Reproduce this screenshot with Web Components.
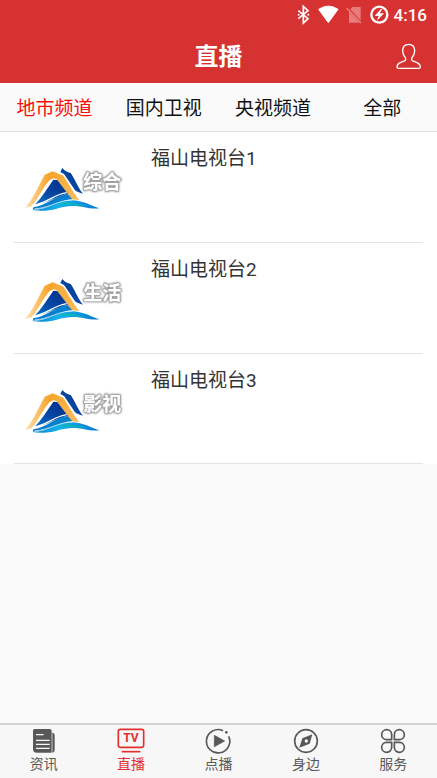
<!DOCTYPE html>
<html lang="zh-CN">
<head>
<meta charset="utf-8">
<meta name="viewport" content="width=device-width, initial-scale=1">
<title>直播</title>
<style>
html, body { margin: 0; height: 100%; }
body { font-family: Roboto, "Noto Sans CJK SC", sans-serif; background: #fafafa; color: #333; }
</style>
</head>
<body>
<live-app></live-app>
<script>
const define = (name, html, setup) => {
  const template = document.createElement('template');
  template.innerHTML = html;
  customElements.define(name, class extends HTMLElement {
    constructor() {
      super();
      this.attachShadow({ mode: 'open' }).append(template.content.cloneNode(true));
    }
    connectedCallback() { if (setup) setup(this, this.shadowRoot); }
  });
};

define('status-bar', `
<style>
:host { display: flex; justify-content: flex-end; align-items: center; height: 30px; padding: 0 10px; color: #fff; font-size: 17px; font-weight: 500; line-height: 20px; }
svg { display: block; width: 107px; height: 30px; }
</style>
<svg viewBox="0 0 321 90" fill="none" aria-hidden="true">
  <path d="M34 32 63 56 49 69V19L63 32 34 56" stroke="#fff" stroke-width="5"/>
  <circle cx="35" cy="44" r="3" fill="#fff"/><circle cx="64" cy="44" r="3" fill="#fff"/>
  <path d="M95 28Q124 9 153 28L124 68Z" fill="#fff" stroke="#fff" stroke-width="3" stroke-linejoin="round"/>
  <path d="M196 21h25v47h-35V33Z" fill="#e87c7d"/>
  <path d="m180 23 44 47" stroke="#d63232" stroke-width="7"/>
  <path d="m179 25 43 44" stroke="#e88383" stroke-width="4"/>
  <circle cx="277" cy="44" r="24" stroke="#fff" stroke-width="7"/>
  <path d="m282 27-19 21h12l-5 14 21-22h-13l8-13Z" fill="#fff"/>
</svg>
<slot></slot>`);

define('page-header', `
<style>
:host { display: block; height: 83px; background: #d63232; color: #fff; }
.bar { display: grid; grid-template-columns: 1fr auto 1fr; align-items: center; height: 53px; padding: 0 15px; }
h1 { grid-column: 2; margin: 0; font-size: 24px; line-height: 32px; font-weight: 700; }
button { justify-self: end; padding: 0; border: 0; background: none; color: inherit; }
svg { display: block; width: 28px; height: 28px; }
</style>
<status-bar>4:16</status-bar>
<div class="bar">
  <h1><slot></slot></h1>
  <button aria-label="个人中心"><svg viewBox="0 0 84 84" fill="none" stroke="#fff" stroke-width="4" stroke-linejoin="round">
    <path d="M34 44C28 37 26 31 26 24 26 12 33 4 44 4s18 8 18 20c0 7-2 13-8 20-3 6-1 9 6 11 12 4 19 7 19 17 0 3-2 4-5 4H14c-3 0-5-1-5-4 0-10 7-13 19-17 7-2 9-5 6-11Z"/></svg></button>
</div>`);

define('channel-tabs', `
<style>
:host { display: block; border-bottom: 1px solid #e2e2e2; background: #fafafa; }
nav { display: grid; grid-template-columns: repeat(4, 1fr); height: 48px; }
::slotted(button) { padding: 3px 0 0; border: 0; background: none; font: inherit; font-size: 19px; line-height: 28px; color: #111; }
::slotted(button[aria-current]) { color: #f80d0d; }
</style>
<nav aria-label="频道分类"><slot></slot></nav>`);

define('channel-logo', `
<style>
:host { display: block; width: 130px; height: 70px; }
svg { display: block; width: 100%; height: 100%; }
text { font-family: "Noto Sans CJK SC", sans-serif; font-size: 57px; font-weight: 700; fill: #fff; stroke: #aaa; stroke-width: 5px; stroke-linejoin: round; paint-order: stroke; filter: drop-shadow(0 0 3px #777); }
</style>
<svg viewBox="0 0 390 210">
  <defs>
    <linearGradient id="gold"><stop stop-color="#ffe0b0"/><stop offset=".45" stop-color="#f6a429"/><stop offset="1" stop-color="#f9bd62"/></linearGradient>
    <linearGradient id="navy" x1="1" y1="0" x2="0" y2="1"><stop stop-color="#002b86"/><stop offset=".55" stop-color="#0747a2"/><stop offset="1" stop-color="#0873ca"/></linearGradient>
    <linearGradient id="sea"><stop stop-color="#0782d2"/><stop offset=".4" stop-color="#15b2e8"/><stop offset="1" stop-color="#0878d2"/></linearGradient>
  </defs>
  <path d="M157 54c8 9 14 12 25 15 12 17 21 43 37 62-9-2-17-5-24-10L162 72l-11-6Z" fill="url(#navy)"/>
  <path d="M45 174C66 151 84 112 104 74l24-10 32 13c17 23 28 49 48 73l-24-2-43-60-11-3-12 6C97 116 86 142 67 168Z" fill="url(#gold)"/>
  <path d="M130 89l12 1 32 42c-34 5-58 27-100 32 21-21 37-48 56-75Z" fill="url(#navy)"/>
  <path d="M70 172c42-7 66-36 103-40l14 16c-36 2-64 28-119 31Z" fill="#087fce"/>
  <path d="M67 180c50 0 73-31 118-29 34 1 59 16 83 24-33 3-52-8-80-7-33 0-48 12-83 14-15 1-27 0-38-2Z" fill="url(#sea)"/>
  <path d="M66 166c45-5 65-33 104-38" fill="none" stroke="#fff" stroke-width="4"/>
  <path d="M73 177c46-3 72-27 114-27" fill="none" stroke="#fff" stroke-width="2"/>
  <path d="M139 163c39-13 72 3 95 5-40-2-64-5-95-5Z" fill="#08b8b4"/>
  <text x="220" y="117"></text>
</svg>`, (host, root) => { root.querySelector('text').textContent = host.getAttribute('label'); });

define('channel-row', `
<style>
:host { display: block; padding: 0 14px; background: #fff; }
article { display: flex; box-sizing: border-box; height: 111px; border-bottom: 1px solid #e4e4e4; }
:host(:last-child) article { height: 110px; }
channel-logo { flex: none; margin: 18px 0 0 -4px; }
h2 { margin: 13px 0 0 11px; font-size: 19px; line-height: 28px; font-weight: 400; color: #333; }
</style>
<article><channel-logo></channel-logo><h2><slot></slot></h2></article>`,
(host, root) => {
  const logo = document.createElement('channel-logo');
  logo.setAttribute('label', host.getAttribute('label'));
  root.querySelector('channel-logo').replaceWith(logo);
});

const icons = {
  news: `<path d="M10 3h46q6 0 6 6v65H17q-11 0-11-11V9q0-6 4-6ZM65 14q6 1 6 7v46q0 7-7 7V14Z" fill="currentColor"/><path d="M15 20h23M15 37h41M15 49h41M15 61h41" stroke="#f7f7f7" stroke-width="4"/>`,
  tv: `<rect x="1" y="4" width="76" height="54" rx="6" fill="none" stroke="currentColor" stroke-width="5"/><path d="M11 71h56" stroke="currentColor" stroke-width="5"/><text x="39" y="43" text-anchor="middle" font-family="Roboto, sans-serif" font-size="36" font-weight="700" fill="currentColor">TV</text>`,
  play: `<path d="M54 8A35 35 0 1 0 71 25" fill="none" stroke="currentColor" stroke-width="5"/><circle cx="64" cy="13" r="4" fill="currentColor"/><path d="M28 22v34l31-17Z" fill="currentColor" stroke="currentColor" stroke-width="2" stroke-linejoin="round"/>`,
  compass: `<circle cx="39" cy="39" r="34" fill="none" stroke="currentColor" stroke-width="5"/><path fill-rule="evenodd" d="M58 19 50 47 19 59 28 31ZM40 34a5 5 0 1 0 0 10 5 5 0 1 0 0-10Z" fill="currentColor"/>`,
  clover: `<path d="M35 35H19A15 15 0 1 1 35 20ZM43 35V20A15 15 0 1 1 59 35ZM35 43V58A15 15 0 1 1 19 43ZM43 43H59A15 15 0 1 1 43 58Z" fill="none" stroke="currentColor" stroke-width="5" stroke-linejoin="round"/>`
};

define('nav-item', `
<style>
:host { display: block; }
a { display: flex; flex-direction: column; align-items: center; padding-top: 3px; font-size: 14px; line-height: 20px; color: #585858; text-decoration: none; }
a[aria-current] { color: #e2302f; }
svg { display: block; width: 26px; height: 26px; overflow: visible; }
</style>
<a href="#"><svg viewBox="0 0 78 78" aria-hidden="true"></svg><span><slot></slot></span></a>`,
(host, root) => {
  root.querySelector('svg').innerHTML = icons[host.getAttribute('icon')];
  if (host.hasAttribute('active')) root.querySelector('a').setAttribute('aria-current', 'page');
});

define('bottom-nav', `
<style>
:host { display: block; background: #f7f7f7; border-top: 2px solid #d2d2d2; }
nav { display: grid; grid-template-columns: repeat(5, 1fr); height: 53px; }
</style>
<nav aria-label="主导航"><slot></slot></nav>`);

define('live-app', `
<style>
:host { display: flex; flex-direction: column; min-height: 100%; }
main { flex: 1; }
</style>
<page-header>直播</page-header>
<channel-tabs><button aria-current="true">地市频道</button><button>国内卫视</button><button>央视频道</button><button>全部</button></channel-tabs>
<main>
  <channel-row label="综合">福山电视台1</channel-row>
  <channel-row label="生活">福山电视台2</channel-row>
  <channel-row label="影视">福山电视台3</channel-row>
</main>
<bottom-nav>
  <nav-item icon="news">资讯</nav-item>
  <nav-item icon="tv" active>直播</nav-item>
  <nav-item icon="play">点播</nav-item>
  <nav-item icon="compass">身边</nav-item>
  <nav-item icon="clover">服务</nav-item>
</bottom-nav>`);
</script>
</body>
</html>
